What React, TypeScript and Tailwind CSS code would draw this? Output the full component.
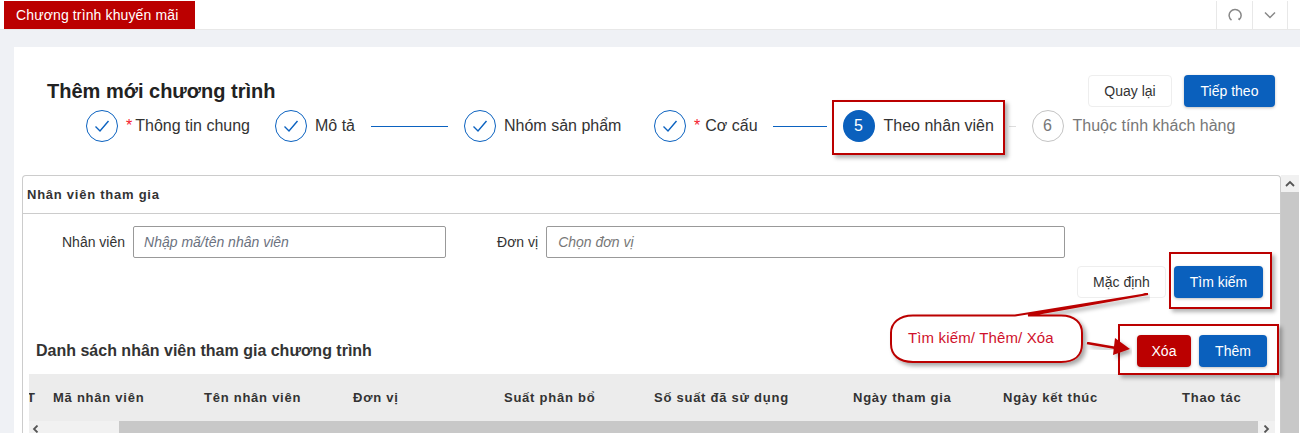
import React from "react";

function Check() {
  return (
    <span className="flex h-8 w-8 shrink-0 items-center justify-center rounded-full border border-[#0b62c0] bg-white">
      <svg width="18" height="18" viewBox="0 0 18 18" fill="none" stroke="#0b62c0" strokeWidth="1.4">
        <path d="M2.5 9.5 L7 14 L15.5 4" />
      </svg>
    </span>
  );
}

function Btn({ w, kind, children }: { w: string; kind: "plain" | "blue" | "red"; children: React.ReactNode }) {
  const base = "flex h-8 items-center justify-center rounded-[4px] text-[14px] ";
  const skin =
    kind === "plain"
      ? "border border-[#eeeeee] bg-white text-[#333333]"
      : kind === "blue"
      ? "bg-[#0a60bd] text-white shadow-[0_1px_3px_rgba(0,0,0,0.25)]"
      : "bg-[#bb0000] text-white shadow-[0_1px_3px_rgba(0,0,0,0.25)]";
  return <div className={base + skin + " " + w}>{children}</div>;
}

const Columns = [
  ["T", "w-[26px] -ml-[2px]"],
  ["Mã nhân viên", "w-[151px]"],
  ["Tên nhân viên", "w-[149px]"],
  ["Đơn vị", "w-[151px]"],
  ["Suất phân bổ", "w-[150px]"],
  ["Số suất đã sử dụng", "w-[199px]"],
  ["Ngày tham gia", "w-[150px]"],
  ["Ngày kết thúc", "w-[179px]"],
  ["Thao tác", "w-[64px]"],
];

export default function App() {
  return (
    <div className="relative flex h-[433px] w-[1300px] flex-col overflow-hidden bg-[#eff1f5] font-['Liberation_Sans',Arial,sans-serif] text-[#333333]">
      <header className="flex h-[30px] shrink-0 items-stretch justify-between border-b border-[#e8e8e8] bg-white">
        <div className="ml-[4px] mt-[1px] flex h-[28px] w-[191px] items-center bg-[#bb0000] pl-[12px] text-[14px] tracking-[0.13px] text-white">
          Chương trình khuyến mãi
        </div>
        <div className="mr-[12px] mt-[1px] flex h-[28px]">
          <div className="flex w-[36px] items-center justify-center border-l border-[#e8e8e8]">
            <svg width="14" height="14" viewBox="0 0 14 14" fill="none" stroke="#888888" strokeWidth="1.5">
              <path d="M3.5 12.2 A6 6 0 1 1 11 12 M11 12 L11.3 9.8" />
            </svg>
          </div>
          <div className="flex w-[36px] items-center justify-center border-x border-[#e8e8e8]">
            <svg width="12" height="8" viewBox="0 0 12 8" fill="none" stroke="#888888" strokeWidth="1.5">
              <path d="M1 1.5 L6 6.5 L11 1.5" />
            </svg>
          </div>
        </div>
      </header>

      <main className="ml-[14px] mt-[17px] flex-1 bg-white pt-[28px]">
        <div className="flex h-8 items-center justify-between pl-[33px] pr-[25px]">
          <h1 className="text-[20px] font-bold text-[#222222]">Thêm mới chương trình</h1>
          <div className="flex gap-3">
            <Btn w="w-[84px]" kind="plain">Quay lại</Btn>
            <Btn w="w-[91px]" kind="blue">Tiếp theo</Btn>
          </div>
        </div>

        <div className="ml-[72px] mt-[3px] flex h-8 items-center whitespace-nowrap text-[16px]">
          <Check />
          <span className="ml-[8px] flex w-[124px] items-center">
            <span className="mr-[3px] leading-none text-[#f5222d]">*</span>Thông tin chung
          </span>
          <span className="ml-[25px]"><Check /></span>
          <span className="ml-[8px]">Mô tả</span>
          <span className="mx-[16px] h-px w-[77px] bg-[#0b62c0]" />
          <Check />
          <span className="ml-[8px] w-[118px]">Nhóm sản phẩm</span>
          <span className="ml-[32px]"><Check /></span>
          <span className="ml-[8px] flex items-center">
            <span className="mr-[5px] leading-none text-[#f5222d]">*</span>Cơ cấu
          </span>
          <span className="ml-[15px] mr-[16px] h-px w-[54px] bg-[#0b62c0]" />
          <span className="flex h-8 w-8 shrink-0 items-center justify-center rounded-full bg-[#0a60bd] text-[16px] text-white">5</span>
          <span className="ml-[8px] w-[110px] pl-px">Theo nhân viên</span>
          <span className="mx-[16px] h-px w-[7px] bg-[#dddddd]" />
          <span className="flex h-8 w-8 shrink-0 items-center justify-center rounded-full border border-[#c4c4c4] text-[16px] text-[#777777]">6</span>
          <span className="ml-[8px] pl-px text-[#777777]">Thuộc tính khách hàng</span>
        </div>

        <div className="ml-[8px] mt-[33px] flex items-start">
          <section className="h-[300px] w-[1259px] rounded-t-[4px] border-x border-t border-[#cccccc]">
            <div className="flex h-[38px] items-center border-b border-[#cccccc] pl-[4px] text-[13px] font-bold tracking-[0.75px]">
              Nhân viên tham gia
            </div>
            <div className="mt-[12px] flex h-8 items-center text-[14px]">
              <label className="ml-[39px]">Nhân viên</label>
              <div className="ml-[8px] flex h-8 w-[313px] items-center rounded-[2px] border border-[#999999] pl-[10px] text-[14px] italic text-[#6b7280]">
                Nhập mã/tên nhân viên
              </div>
              <label className="ml-[51px]">Đơn vị</label>
              <div className="ml-[8px] flex h-8 w-[519px] items-center rounded-[2px] border border-[#999999] pl-[11px] text-[14px] italic text-[#777777]">
                Chọn đơn vị
              </div>
            </div>
            <div className="mt-[8px] flex justify-end gap-2 pr-[17px]">
              <Btn w="w-[89px]" kind="plain">Mặc định</Btn>
              <Btn w="w-[89px]" kind="blue">Tìm kiếm</Btn>
            </div>
            <div className="mt-[37px] flex h-8 items-center justify-between pl-[13px] pr-[13px]">
              <h2 className="text-[16px] font-bold">Danh sách nhân viên tham gia chương trình</h2>
              <div className="flex gap-2">
                <Btn w="w-[54px]" kind="red">Xóa</Btn>
                <Btn w="w-[68px]" kind="blue">Thêm</Btn>
              </div>
            </div>
            <div className="ml-[6px] mt-[7px] w-[1246px]">
              <div className="flex h-[47px] items-center overflow-hidden bg-[#ececec] text-[13px] font-bold tracking-[0.75px]">
                {Columns.map(([label, cls]) => (
                  <div key={label} className={"shrink-0 whitespace-nowrap " + cls}>{label}</div>
                ))}
              </div>
              <div className="flex h-[12px] bg-[#f1f1f1]">
                <div className="flex w-[90px] items-start pl-[3px] pt-[4px]">
                  <svg width="8" height="8" viewBox="0 0 8 8" fill="none" stroke="#555555" strokeWidth="1.8"><path d="M5.5 0.5 L2 4 L5.5 7.5" /></svg>
                </div>
                <div className="h-full w-[1139px] bg-[#c8c8c8]" />
                <div className="flex flex-1 items-start pl-[4px] pt-[4px]">
                  <svg width="8" height="8" viewBox="0 0 8 8" fill="none" stroke="#555555" strokeWidth="1.8"><path d="M2.5 0.5 L6 4 L2.5 7.5" /></svg>
                </div>
              </div>
            </div>
          </section>
          <div className="flex h-[258px] w-[18px] flex-col bg-[#c8c8c8]">
            <div className="flex h-[17px] items-center justify-center bg-[#f1f1f1]">
              <svg width="10" height="7" viewBox="0 0 10 7" fill="none" stroke="#555555" strokeWidth="1.8"><path d="M1 6 L5 2 L9 6" /></svg>
            </div>
          </div>
        </div>
      </main>

      {/* red annotation frames */}
      <div className="absolute left-[832px] top-[100px] h-[55px] w-[173px] border-2 border-[#bb0000] shadow-[3px_3px_4px_rgba(0,0,0,0.3)]" />
      <div className="absolute left-[1169px] top-[252px] h-[57px] w-[103px] border-2 border-[#bb0000] shadow-[3px_3px_4px_rgba(0,0,0,0.3)]" />
      <div className="absolute left-[1118px] top-[324px] h-[51px] w-[161px] border-2 border-[#bb0000] shadow-[3px_3px_4px_rgba(0,0,0,0.3)]" />

      {/* callout */}
      <svg className="absolute left-[880px] top-[286px]" width="270" height="90" viewBox="0 0 270 90" fill="none">
        <defs>
          <filter id="sh" x="-10%" y="-20%" width="120%" height="150%">
            <feDropShadow dx="3" dy="3" stdDeviation="2" floodColor="#000000" floodOpacity="0.35" />
          </filter>
        </defs>
        <path
          d="M33 29.5 H135 L268 8 L148 29.5 H181 C195 29.5 202 37 202 47 V58 C202 69 195 76 181 76 H33 C19 76 11 69 11 58 V47 C11 37 19 29.5 33 29.5 Z"
          fill="#ffffff"
          stroke="#bb0000"
          strokeWidth="2"
          filter="url(#sh)"
        />
        <path d="M207 57 L236 62" stroke="#bb0000" strokeWidth="2.5" filter="url(#sh)" />
        <path d="M250 63 L235 52 L233 69 Z" fill="#bb0000" filter="url(#sh)" />
      </svg>
      <div className="absolute left-[908px] top-[330px] text-[15px] leading-4 tracking-[0.14px] text-[#d0112b]">Tìm kiếm/ Thêm/ Xóa</div>
    </div>
  );
}
